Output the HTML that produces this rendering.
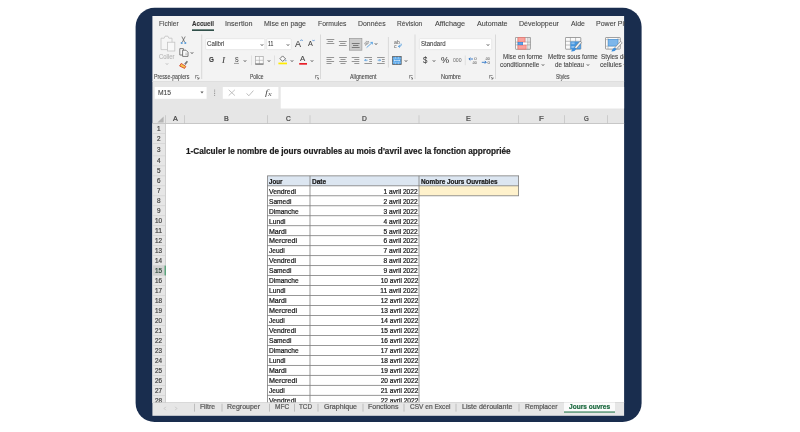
<!DOCTYPE html>
<html lang="fr">
<head>
<meta charset="utf-8">
<title>Excel - Jours ouvres</title>
<style>
html,body{margin:0;padding:0;background:#fff;}
body{width:800px;height:432px;position:relative;overflow:hidden;font-family:"Liberation Sans",sans-serif;}
.screen{will-change:transform;filter:blur(0.3px);position:absolute;left:0;top:0;width:800px;height:432px;clip-path:inset(16.00px 175.90px 16.20px 152.40px);}
.r{position:absolute;display:block;}
.t{position:absolute;white-space:nowrap;line-height:12px;font-family:"Liberation Sans",sans-serif;}
</style>
</head>
<body>
<svg class="r" style="left:0;top:0" width="800" height="432" viewBox="0 0 800 432"><rect x="135.6" y="7.8" width="506" height="414.2" rx="19" fill="#192d4e"/></svg>
<div class="screen">
<svg class="r" style="left:0;top:0" width="800" height="432" viewBox="0 0 800 432"><rect x="152.40" y="16.00" width="471.70" height="65.30" fill="#f3f3f3"/><rect x="152.40" y="81.30" width="471.70" height="42.70" fill="#e6e6e6"/><rect x="152.40" y="81.00" width="471.70" height="1.00" fill="#dfdfdf"/></svg>
<span class="t" style="top:18.40px;font-size:7.6px;color:#444;left:159.00px;transform-origin:0 50%;transform:scaleX(0.8598);-webkit-text-stroke:0.1px currentColor;">Fichier</span>
<span class="t" style="top:18.40px;font-size:7.6px;color:#333;font-weight:700;left:192.00px;transform-origin:0 50%;transform:scaleX(0.8143);-webkit-text-stroke:0.1px currentColor;">Accueil</span>
<svg class="r" style="left:0;top:0" width="800" height="432" viewBox="0 0 800 432"><rect x="192.00" y="29.40" width="22.00" height="1.50" fill="#1c3f38"/></svg>
<span class="t" style="top:18.40px;font-size:7.6px;color:#444;left:225.00px;transform-origin:0 50%;transform:scaleX(0.9471);-webkit-text-stroke:0.1px currentColor;">Insertion</span>
<span class="t" style="top:18.40px;font-size:7.6px;color:#444;left:264.00px;transform-origin:0 50%;transform:scaleX(0.9212);-webkit-text-stroke:0.1px currentColor;">Mise en page</span>
<span class="t" style="top:18.40px;font-size:7.6px;color:#444;left:318.00px;transform-origin:0 50%;transform:scaleX(0.8971);-webkit-text-stroke:0.1px currentColor;">Formules</span>
<span class="t" style="top:18.40px;font-size:7.6px;color:#444;left:358.00px;transform-origin:0 50%;transform:scaleX(0.9077);-webkit-text-stroke:0.1px currentColor;">Données</span>
<span class="t" style="top:18.40px;font-size:7.6px;color:#444;left:397.40px;transform-origin:0 50%;transform:scaleX(0.8652);-webkit-text-stroke:0.1px currentColor;">Révision</span>
<span class="t" style="top:18.40px;font-size:7.6px;color:#444;left:435.00px;transform-origin:0 50%;transform:scaleX(0.9514);-webkit-text-stroke:0.1px currentColor;">Affichage</span>
<span class="t" style="top:18.40px;font-size:7.6px;color:#444;left:476.60px;transform-origin:0 50%;transform:scaleX(0.9411);-webkit-text-stroke:0.1px currentColor;">Automate</span>
<span class="t" style="top:18.40px;font-size:7.6px;color:#444;left:518.90px;transform-origin:0 50%;transform:scaleX(0.9266);-webkit-text-stroke:0.1px currentColor;">Développeur</span>
<span class="t" style="top:18.40px;font-size:7.6px;color:#444;left:570.50px;transform-origin:0 50%;transform:scaleX(0.9077);-webkit-text-stroke:0.1px currentColor;">Aide</span>
<span class="t" style="top:18.40px;font-size:7.6px;color:#444;left:596.00px;transform-origin:0 50%;transform:scaleX(0.9252);-webkit-text-stroke:0.1px currentColor;">Power Pivot</span>
<svg class="r" style="left:0;top:0" width="800" height="432" viewBox="0 0 800 432"><rect x="201.35" y="34.50" width="0.80" height="44.50" fill="#d2d2d2"/><rect x="320.10" y="34.50" width="0.80" height="44.50" fill="#d2d2d2"/><rect x="414.60" y="34.50" width="0.80" height="44.50" fill="#d2d2d2"/><rect x="495.00" y="34.50" width="0.80" height="44.50" fill="#d2d2d2"/><rect x="387.90" y="37.00" width="0.80" height="30.50" fill="#d2d2d2"/><rect x="251.05" y="55.50" width="0.70" height="9.70" fill="#d8d8d8"/><rect x="274.15" y="55.50" width="0.70" height="9.70" fill="#d8d8d8"/><rect x="464.85" y="55.50" width="0.70" height="9.70" fill="#d8d8d8"/></svg>
<span class="t" style="top:71.20px;font-size:6.4px;color:#4a4a4a;left:154.00px;transform-origin:0 50%;transform:scaleX(0.8259);-webkit-text-stroke:0.1px currentColor;">Presse-papiers</span>
<span class="t" style="top:71.20px;font-size:6.4px;color:#4a4a4a;left:250.00px;transform-origin:0 50%;transform:scaleX(0.7698);-webkit-text-stroke:0.1px currentColor;">Police</span>
<span class="t" style="top:71.20px;font-size:6.4px;color:#4a4a4a;left:350.20px;transform-origin:0 50%;transform:scaleX(0.8301);-webkit-text-stroke:0.1px currentColor;">Alignement</span>
<span class="t" style="top:71.20px;font-size:6.4px;color:#4a4a4a;left:441.00px;transform-origin:0 50%;transform:scaleX(0.8797);-webkit-text-stroke:0.1px currentColor;">Nombre</span>
<span class="t" style="top:71.20px;font-size:6.4px;color:#4a4a4a;left:556.00px;transform-origin:0 50%;transform:scaleX(0.7813);-webkit-text-stroke:0.1px currentColor;">Styles</span>
<svg class="r" style="left:195.20px;top:75.20px" width="4.5" height="4.5" viewBox="0 0 4.5 4.5"><path d="M0.4 3.6V0.4H3.6" fill="none" stroke="#666" stroke-width="0.7"/><path d="M1.8 1.8L4 4M4 2.2V4H2.2" fill="none" stroke="#666" stroke-width="0.7"/></svg>
<svg class="r" style="left:314.60px;top:75.20px" width="4.5" height="4.5" viewBox="0 0 4.5 4.5"><path d="M0.4 3.6V0.4H3.6" fill="none" stroke="#666" stroke-width="0.7"/><path d="M1.8 1.8L4 4M4 2.2V4H2.2" fill="none" stroke="#666" stroke-width="0.7"/></svg>
<svg class="r" style="left:408.80px;top:75.20px" width="4.5" height="4.5" viewBox="0 0 4.5 4.5"><path d="M0.4 3.6V0.4H3.6" fill="none" stroke="#666" stroke-width="0.7"/><path d="M1.8 1.8L4 4M4 2.2V4H2.2" fill="none" stroke="#666" stroke-width="0.7"/></svg>
<svg class="r" style="left:489.20px;top:75.20px" width="4.5" height="4.5" viewBox="0 0 4.5 4.5"><path d="M0.4 3.6V0.4H3.6" fill="none" stroke="#666" stroke-width="0.7"/><path d="M1.8 1.8L4 4M4 2.2V4H2.2" fill="none" stroke="#666" stroke-width="0.7"/></svg>
<svg class="r" style="left:160.00px;top:35.00px" width="16" height="17" viewBox="0 0 16 17"><path d="M1 3.2H4.2L5 1.2H8L8.8 3.2H12V14.6H1Z" fill="#f6f6f6" stroke="#c4c4c4" stroke-width="0.8"/><rect x="7.4" y="7.2" width="7.4" height="8.8" fill="#f8f8f8" stroke="#c4c4c4" stroke-width="0.8"/></svg>
<span class="t" style="top:50.60px;font-size:7.0px;color:#b4b4b4;left:159.00px;transform-origin:0 50%;transform:scaleX(0.8471);-webkit-text-stroke:0.1px currentColor;">Coller</span>
<svg class="r" style="left:163.60px;top:61.20px" width="6" height="6" viewBox="0 0 6 6"><path d="M1.85 2.3249999999999997 L3 3.575 L4.15 2.3249999999999997" fill="none" stroke="#bbb" stroke-width="0.95"/></svg>
<svg class="r" style="left:179.50px;top:35.50px" width="7" height="9" viewBox="0 0 7 9"><path d="M1.8 0.5L4.6 6M5.2 0.5L2.4 6" stroke="#555" stroke-width="0.7" fill="none"/><circle cx="1.7" cy="7" r="1.1" fill="#5b9bd5"/><circle cx="5.3" cy="7" r="1.1" fill="#5b9bd5"/></svg>
<svg class="r" style="left:178.60px;top:47.60px" width="10" height="9" viewBox="0 0 10 9"><path d="M0.8 0.6H4.4V7H0.8Z" fill="#fafafa" stroke="#555" stroke-width="0.75"/><path d="M3.6 2.2H7L9 4.2V8.4H3.6Z" fill="#fafafa" stroke="#555" stroke-width="0.75"/><path d="M6.2 5.2H8.2M6.2 6.6H8.2" stroke="#999" stroke-width="0.5"/></svg>
<svg class="r" style="left:189.20px;top:49.70px" width="6" height="6" viewBox="0 0 6 6"><path d="M1.85 2.3249999999999997 L3 3.575 L4.15 2.3249999999999997" fill="none" stroke="#4a4a4a" stroke-width="0.95"/></svg>
<svg class="r" style="left:178.80px;top:59.60px" width="10" height="9" viewBox="0 0 10 9"><path d="M5.2 3.8L7.8 0.8L9 1.8L6.6 5Z" fill="#777"/><path d="M2.2 3.4L6.8 6.4L5.6 8.4L0.6 6Z" fill="#f2c94c" stroke="#d9442e" stroke-width="0.9"/></svg>
<svg class="r" style="left:0;top:0" width="800" height="432" viewBox="0 0 800 432"><rect x="205.70" y="38.70" width="59.10" height="10.90" fill="#fff" rx="1" stroke="#dedede" stroke-width="0.6"/></svg>
<span class="t" style="top:38.30px;font-size:6.8px;color:#444;left:207.20px;transform-origin:0 50%;transform:scaleX(0.8980);-webkit-text-stroke:0.1px currentColor;">Calibri</span>
<svg class="r" style="left:258.60px;top:41.60px" width="6" height="6" viewBox="0 0 6 6"><path d="M1.85 2.3249999999999997 L3 3.575 L4.15 2.3249999999999997" fill="none" stroke="#4a4a4a" stroke-width="0.95"/></svg>
<svg class="r" style="left:0;top:0" width="800" height="432" viewBox="0 0 800 432"><rect x="266.70" y="38.70" width="24.50" height="10.90" fill="#fff" rx="1" stroke="#dedede" stroke-width="0.6"/></svg>
<span class="t" style="top:38.30px;font-size:6.8px;color:#333;left:267.90px;transform-origin:0 50%;transform:scaleX(0.7504);-webkit-text-stroke:0.1px currentColor;">11</span>
<svg class="r" style="left:285.40px;top:41.60px" width="6" height="6" viewBox="0 0 6 6"><path d="M1.85 2.3249999999999997 L3 3.575 L4.15 2.3249999999999997" fill="none" stroke="#4a4a4a" stroke-width="0.95"/></svg>
<span class="t" style="top:37.60px;font-size:9.4px;color:#444;left:294.60px;transform-origin:0 50%;transform:scaleX(0.9576);-webkit-text-stroke:0.1px currentColor;">A</span>
<svg class="r" style="left:300.20px;top:39.20px" width="3" height="3" viewBox="0 0 3 3"><path d="M0.3 2L1.5 0.7L2.7 2" fill="none" stroke="#2e75c7" stroke-width="0.7"/></svg>
<span class="t" style="top:38.40px;font-size:7.6px;color:#444;left:308.20px;transform-origin:0 50%;transform:scaleX(0.9452);-webkit-text-stroke:0.1px currentColor;">A</span>
<svg class="r" style="left:312.40px;top:39.40px" width="3" height="3" viewBox="0 0 3 3"><path d="M0.3 0.8L1.5 2.1L2.7 0.8" fill="none" stroke="#2e75c7" stroke-width="0.7"/></svg>
<span class="t" style="top:54.40px;font-size:7.2px;color:#333;font-weight:700;left:209.30px;transform-origin:0 50%;transform:scaleX(0.8760);-webkit-text-stroke:0.1px currentColor;">G</span>
<span class="t" style="font-family:'Liberation Serif',serif;top:55.00px;font-size:7.6px;color:#444;font-style:italic;left:222.40px;transform-origin:0 50%;transform:scaleX(1.1852);-webkit-text-stroke:0.1px currentColor;">I</span>
<span class="t" style="top:53.80px;font-size:6.8px;color:#444;left:234.60px;transform-origin:0 50%;transform:scaleX(0.7918);-webkit-text-stroke:0.1px currentColor;">S</span>
<svg class="r" style="left:0;top:0" width="800" height="432" viewBox="0 0 800 432"><rect x="234.00" y="62.95" width="4.90" height="0.60" fill="#666"/></svg>
<svg class="r" style="left:242.40px;top:57.80px" width="6" height="6" viewBox="0 0 6 6"><path d="M1.85 2.3249999999999997 L3 3.575 L4.15 2.3249999999999997" fill="none" stroke="#4a4a4a" stroke-width="0.95"/></svg>
<svg class="r" style="left:255.00px;top:56.00px" width="9" height="9" viewBox="0 0 9 9"><rect x="0.6" y="0.6" width="7.6" height="7.4" fill="#fafafa" stroke="#9a9a9a" stroke-width="0.6"/><path d="M4.4 0.6V8M0.6 4.3H8.2" stroke="#a8a8a8" stroke-width="0.6"/><path d="M0.3 8.1H8.5" stroke="#555" stroke-width="0.9"/></svg>
<svg class="r" style="left:265.60px;top:57.80px" width="6" height="6" viewBox="0 0 6 6"><path d="M1.85 2.3249999999999997 L3 3.575 L4.15 2.3249999999999997" fill="none" stroke="#4a4a4a" stroke-width="0.95"/></svg>
<svg class="r" style="left:278.40px;top:55.40px" width="10" height="10" viewBox="0 0 10 10"><path d="M4.6 0.9L7.6 3.9L4.6 6.4L1.9 3.7Z" fill="#fafafa" stroke="#555" stroke-width="0.8"/><path d="M7.9 4.4Q9 6 7.9 6.4Q6.9 6 7.9 4.4Z" fill="#2e75c7"/><rect x="0.4" y="7.6" width="8.6" height="1.7" fill="#ffeb00"/></svg>
<svg class="r" style="left:288.80px;top:57.80px" width="6" height="6" viewBox="0 0 6 6"><path d="M1.85 2.3249999999999997 L3 3.575 L4.15 2.3249999999999997" fill="none" stroke="#4a4a4a" stroke-width="0.95"/></svg>
<span class="t" style="top:53.20px;font-size:7.4px;color:#444;left:300.40px;transform-origin:0 50%;transform:scaleX(1.0532);-webkit-text-stroke:0.1px currentColor;">A</span>
<svg class="r" style="left:0;top:0" width="800" height="432" viewBox="0 0 800 432"><rect x="299.20" y="63.00" width="7.80" height="1.70" fill="#e8202a"/></svg>
<svg class="r" style="left:309.20px;top:57.80px" width="6" height="6" viewBox="0 0 6 6"><path d="M1.85 2.3249999999999997 L3 3.575 L4.15 2.3249999999999997" fill="none" stroke="#4a4a4a" stroke-width="0.95"/></svg>
<svg class="r" style="left:0;top:0" width="800" height="432" viewBox="0 0 800 432"><rect x="326.50" y="39.15" width="7.80" height="0.70" fill="#6e6e6e"/><rect x="327.70" y="41.25" width="5.40" height="0.70" fill="#6e6e6e"/><rect x="326.50" y="43.30" width="7.80" height="0.70" fill="#6e6e6e"/><rect x="338.90" y="41.10" width="7.80" height="0.70" fill="#6e6e6e"/><rect x="340.10" y="43.15" width="5.40" height="0.70" fill="#6e6e6e"/><rect x="338.90" y="45.25" width="7.80" height="0.70" fill="#6e6e6e"/><rect x="349.40" y="38.40" width="12.50" height="11.80" fill="#cccccc" stroke="#9a9a9a" stroke-width="0.7"/><rect x="351.80" y="43.10" width="7.80" height="0.70" fill="#555"/><rect x="353.00" y="45.15" width="5.40" height="0.70" fill="#555"/><rect x="351.80" y="47.25" width="7.80" height="0.70" fill="#555"/></svg>
<svg class="r" style="left:364.00px;top:38.60px" width="10" height="10" viewBox="0 0 10 10"><text x="0.2" y="5.6" font-family="Liberation Sans, sans-serif" font-size="5" fill="#666" transform="rotate(-35 2.5 4.5)">ab</text><path d="M2.6 8.6L8.4 3.4M8.4 3.4H6.4M8.4 3.4V5.4" stroke="#3a92dc" stroke-width="0.75" fill="none"/></svg>
<svg class="r" style="left:373.40px;top:41.20px" width="6" height="6" viewBox="0 0 6 6"><path d="M1.85 2.3249999999999997 L3 3.575 L4.15 2.3249999999999997" fill="none" stroke="#4a4a4a" stroke-width="0.95"/></svg>
<svg class="r" style="left:392.80px;top:39.00px" width="10" height="10" viewBox="0 0 10 10"><text x="1" y="4.8" font-family="Liberation Sans, sans-serif" font-size="5.2" fill="#5a5a5a">ab</text><text x="1" y="8.8" font-family="Liberation Sans, sans-serif" font-size="5.2" fill="#5a5a5a">c</text><path d="M8 4.6Q9 7.6 5.6 7.4M6.8 6.2L5.4 7.4L6.8 8.6" stroke="#3a8fdc" stroke-width="0.8" fill="none"/></svg>
<svg class="r" style="left:0;top:0" width="800" height="432" viewBox="0 0 800 432"><rect x="326.50" y="57.05" width="7.60" height="0.70" fill="#6e6e6e"/><rect x="326.50" y="59.15" width="5.00" height="0.70" fill="#6e6e6e"/><rect x="326.50" y="61.20" width="7.60" height="0.70" fill="#6e6e6e"/><rect x="326.50" y="63.25" width="5.00" height="0.70" fill="#6e6e6e"/><rect x="339.20" y="57.05" width="7.60" height="0.70" fill="#6e6e6e"/><rect x="340.50" y="59.15" width="5.00" height="0.70" fill="#6e6e6e"/><rect x="339.20" y="61.20" width="7.60" height="0.70" fill="#6e6e6e"/><rect x="340.50" y="63.25" width="5.00" height="0.70" fill="#6e6e6e"/><rect x="351.70" y="57.05" width="7.60" height="0.70" fill="#6e6e6e"/><rect x="354.30" y="59.15" width="5.00" height="0.70" fill="#6e6e6e"/><rect x="351.70" y="61.20" width="7.60" height="0.70" fill="#6e6e6e"/><rect x="354.30" y="63.25" width="5.00" height="0.70" fill="#6e6e6e"/><rect x="364.40" y="57.05" width="7.60" height="0.70" fill="#6e6e6e"/><rect x="369.20" y="59.15" width="2.80" height="0.70" fill="#6e6e6e"/><rect x="369.20" y="61.20" width="2.80" height="0.70" fill="#6e6e6e"/><rect x="364.40" y="63.25" width="7.60" height="0.70" fill="#6e6e6e"/></svg>
<svg class="r" style="left:364.40px;top:58.20px" width="4.4" height="4.4" viewBox="0 0 4.4 4.4"><path d="M3.6 2.2H0.7M1.8 1.1L0.7 2.2L1.8 3.3" stroke="#3a8fdc" stroke-width="0.75" fill="none"/></svg>
<svg class="r" style="left:0;top:0" width="800" height="432" viewBox="0 0 800 432"><rect x="377.10" y="57.05" width="7.60" height="0.70" fill="#6e6e6e"/><rect x="381.90" y="59.15" width="2.80" height="0.70" fill="#6e6e6e"/><rect x="381.90" y="61.20" width="2.80" height="0.70" fill="#6e6e6e"/><rect x="377.10" y="63.25" width="7.60" height="0.70" fill="#6e6e6e"/></svg>
<svg class="r" style="left:376.80px;top:58.20px" width="4.4" height="4.4" viewBox="0 0 4.4 4.4"><path d="M0.7 2.2H3.6M2.5 1.1L3.6 2.2L2.5 3.3" stroke="#3a8fdc" stroke-width="0.75" fill="none"/></svg>
<svg class="r" style="left:392.00px;top:55.80px" width="10" height="9.4" viewBox="0 0 10 9.4"><rect x="0.6" y="0.6" width="8.6" height="7.8" fill="#58a6e8" stroke="#5c5c5c" stroke-width="0.8"/><path d="M0.6 2.6H9.2M0.6 6.4H9.2" stroke="#9ccaf2" stroke-width="0.5"/><path d="M3.4 0.8V2.6M6.4 0.8V2.6M3.4 6.4V8.2M6.4 6.4V8.2" stroke="#cfe6fa" stroke-width="0.5"/><path d="M2 4.5H7.8M2.9 3.7L2 4.5L2.9 5.3M6.9 3.7L7.8 4.5L6.9 5.3" stroke="#eef6fd" stroke-width="0.6" fill="none"/></svg>
<svg class="r" style="left:403.10px;top:57.60px" width="6" height="6" viewBox="0 0 6 6"><path d="M1.85 2.3249999999999997 L3 3.575 L4.15 2.3249999999999997" fill="none" stroke="#4a4a4a" stroke-width="0.95"/></svg>
<svg class="r" style="left:0;top:0" width="800" height="432" viewBox="0 0 800 432"><rect x="419.40" y="38.70" width="72.30" height="10.90" fill="#fff" rx="1" stroke="#dedede" stroke-width="0.6"/></svg>
<span class="t" style="top:38.30px;font-size:6.8px;color:#444;left:420.60px;transform-origin:0 50%;transform:scaleX(0.8915);-webkit-text-stroke:0.1px currentColor;">Standard</span>
<svg class="r" style="left:485.00px;top:41.60px" width="6" height="6" viewBox="0 0 6 6"><path d="M1.85 2.3249999999999997 L3 3.575 L4.15 2.3249999999999997" fill="none" stroke="#4a4a4a" stroke-width="0.95"/></svg>
<span class="t" style="top:54.20px;font-size:9.0px;color:#3a3a3a;left:422.60px;transform-origin:0 50%;transform:scaleX(0.8773);-webkit-text-stroke:0.05px currentColor;">$</span>
<svg class="r" style="left:431.30px;top:57.80px" width="6" height="6" viewBox="0 0 6 6"><path d="M1.85 2.3249999999999997 L3 3.575 L4.15 2.3249999999999997" fill="none" stroke="#4a4a4a" stroke-width="0.95"/></svg>
<span class="t" style="top:54.20px;font-size:9.0px;color:#3a3a3a;left:441.20px;transform-origin:0 50%;transform:scaleX(1.0105);-webkit-text-stroke:0.05px currentColor;">%</span>
<span class="t" style="top:55.30px;font-size:4.6px;color:#6a6a6a;left:453.20px;transform-origin:0 50%;transform:scaleX(1.1210);-webkit-text-stroke:0px currentColor;">000</span>
<svg class="r" style="left:468.40px;top:55.80px" width="10" height="9.5" viewBox="0 0 10 9.5"><text x="8.7" y="3.8" font-family="Liberation Sans, sans-serif" font-size="4.3" fill="#444" text-anchor="end">0</text><text x="8.7" y="7.9" font-family="Liberation Sans, sans-serif" font-size="4.3" fill="#444" text-anchor="end" textLength="5" lengthAdjust="spacingAndGlyphs">.00</text><path d="M5 3H0.9M2.3 1.6L0.9 3L2.3 4.4" stroke="#2e75c7" stroke-width="0.9" fill="none"/></svg>
<svg class="r" style="left:480.80px;top:55.80px" width="10" height="9.5" viewBox="0 0 10 9.5"><text x="8.8" y="3.8" font-family="Liberation Sans, sans-serif" font-size="4.3" fill="#444" text-anchor="end" textLength="5" lengthAdjust="spacingAndGlyphs">.00</text><text x="8.8" y="7.9" font-family="Liberation Sans, sans-serif" font-size="4.3" fill="#444" text-anchor="end">0</text><path d="M0.8 6.3H5.2M3.8 4.9L5.2 6.3L3.8 7.7" stroke="#2e75c7" stroke-width="0.9" fill="none"/></svg>
<svg class="r" style="left:515.20px;top:36.50px" width="16" height="13" viewBox="0 0 16 13"><rect x="0.4" y="0.4" width="15.2" height="11.9" fill="#fafafa" stroke="#7a7a7a" stroke-width="0.7" rx="0.6"/><path d="M0.4 5.1H15.6M0.4 7.9H15.6M2.8 0.4V12.3M10 0.4V12.3M12.3 0.4V12.3M14 0.4V12.3" stroke="#8c8c8c" stroke-width="0.5" fill="none"/><rect x="3" y="0.7" width="7" height="4.3" fill="#f9a29d" stroke="#f26d63" stroke-width="0.6"/><rect x="3" y="8" width="8.1" height="4.1" fill="#f9a29d" stroke="#f26d63" stroke-width="0.6"/><rect x="7.7" y="5.6" width="4.2" height="1.9" fill="#fff"/><rect x="3" y="5.3" width="4.7" height="2.5" fill="#5fa3e8" stroke="#2f7fd6" stroke-width="0.6"/></svg>
<span class="t" style="top:50.70px;font-size:6.8px;color:#444;left:503.00px;transform-origin:0 50%;transform:scaleX(0.9196);-webkit-text-stroke:0.1px currentColor;">Mise en forme</span>
<span class="t" style="top:59.10px;font-size:6.8px;color:#444;left:500.40px;transform-origin:0 50%;transform:scaleX(0.9452);-webkit-text-stroke:0.1px currentColor;">conditionnelle</span>
<svg class="r" style="left:540.20px;top:61.80px" width="6" height="6" viewBox="0 0 6 6"><path d="M1.9 2.35 L3 3.55 L4.1 2.35" fill="none" stroke="#4a4a4a" stroke-width="0.95"/></svg>
<svg class="r" style="left:564.80px;top:36.60px" width="18" height="16" viewBox="0 0 18 16"><rect x="0.4" y="0.5" width="15.4" height="11.7" fill="#fafafa" stroke="#7a7a7a" stroke-width="0.7" rx="0.6"/><path d="M0.4 4.3H15.8M0.4 8H15.8M5.4 0.5V12.2M10.6 0.5V12.2" stroke="#8c8c8c" stroke-width="0.55" fill="none"/><rect x="5.4" y="4.5" width="10.4" height="7.7" fill="#4596de"/><rect x="6.4" y="5.4" width="3.2" height="1.8" fill="#8fc0ee"/><rect x="6.4" y="9" width="3.2" height="2" fill="#8fc0ee"/><rect x="12" y="9" width="2.8" height="2" fill="#6aaae6"/><path d="M15 4.2L16.6 5.6L11.2 11.8L9.6 10.4Z" fill="#f6f6f6" stroke="#6a6a6a" stroke-width="0.55"/><path d="M9.8 10.6Q7.4 10.8 6.2 14.6Q10 14.8 11.2 12Z" fill="#3d8fdc"/></svg>
<span class="t" style="top:50.70px;font-size:6.8px;color:#444;left:547.80px;transform-origin:0 50%;transform:scaleX(0.9091);-webkit-text-stroke:0.1px currentColor;">Mettre sous forme</span>
<span class="t" style="top:59.10px;font-size:6.8px;color:#444;left:555.00px;transform-origin:0 50%;transform:scaleX(0.9134);-webkit-text-stroke:0.1px currentColor;">de tableau</span>
<svg class="r" style="left:584.80px;top:61.80px" width="6" height="6" viewBox="0 0 6 6"><path d="M1.9 2.35 L3 3.55 L4.1 2.35" fill="none" stroke="#4a4a4a" stroke-width="0.95"/></svg>
<svg class="r" style="left:605.00px;top:36.60px" width="18" height="16" viewBox="0 0 18 16"><rect x="0.5" y="0.5" width="14.8" height="11.6" fill="#fafafa" stroke="#7a7a7a" stroke-width="0.7" rx="0.6"/><path d="M0.5 2.6H15.3M0.5 9.2H15.3M3 0.5V12.1M13 0.5V12.1" stroke="#9a9a9a" stroke-width="0.5" fill="none"/><rect x="3.2" y="2.4" width="9.8" height="6.6" fill="#7db6ea" stroke="#3f8fd8" stroke-width="0.6"/><path d="M15.6 4.4L17.2 5.8L11.4 12L9.8 10.6Z" fill="#f6f6f6" stroke="#6a6a6a" stroke-width="0.55"/><path d="M10 10.8Q7.6 11 6.4 14.6Q10.2 14.8 11.4 12.2Z" fill="#3d8fdc"/></svg>
<span class="t" style="top:50.70px;font-size:6.8px;color:#444;left:600.50px;transform-origin:0 50%;transform:scaleX(0.9296);-webkit-text-stroke:0.1px currentColor;">Styles de</span>
<span class="t" style="top:59.10px;font-size:6.8px;color:#444;left:599.60px;transform-origin:0 50%;transform:scaleX(0.9660);-webkit-text-stroke:0.1px currentColor;">cellules</span>
<svg class="r" style="left:622.00px;top:61.80px" width="6" height="6" viewBox="0 0 6 6"><path d="M1.9 2.35 L3 3.55 L4.1 2.35" fill="none" stroke="#4a4a4a" stroke-width="0.95"/></svg>
<svg class="r" style="left:0;top:0" width="800" height="432" viewBox="0 0 800 432"><rect x="154.70" y="87.00" width="51.90" height="11.80" fill="#fff"/></svg>
<span class="t" style="top:87.00px;font-size:6.8px;color:#444;left:157.50px;transform-origin:0 50%;transform:scaleX(0.9898);-webkit-text-stroke:0.1px currentColor;">M15</span>
<svg class="r" style="left:199.80px;top:91.40px" width="4" height="3" viewBox="0 0 4 3"><path d="M0.4 0.5L2 2.4L3.6 0.5Z" fill="#5a5a5a"/></svg>
<svg class="r" style="left:0;top:0" width="800" height="432" viewBox="0 0 800 432"><rect x="214.20" y="89.65" width="0.90" height="0.90" fill="#808080"/><rect x="214.20" y="91.40" width="0.90" height="0.90" fill="#808080"/><rect x="214.20" y="93.15" width="0.90" height="0.90" fill="#808080"/><rect x="214.20" y="94.90" width="0.90" height="0.90" fill="#808080"/><rect x="222.80" y="87.00" width="55.60" height="11.80" fill="#fff"/></svg>
<svg class="r" style="left:227.80px;top:89.40px" width="8" height="8" viewBox="0 0 8 8"><path d="M0.7 0.8L6.9 6.6M6.9 0.8L0.7 6.6" stroke="#b2b2b2" stroke-width="0.8"/></svg>
<svg class="r" style="left:246.40px;top:89.60px" width="8" height="7" viewBox="0 0 8 7"><path d="M0.6 3.4L2.8 5.8L7.4 0.6" stroke="#b2b2b2" stroke-width="0.85" fill="none"/></svg>
<span class="t" style="font-family:'Liberation Serif',serif;top:86.80px;font-size:8.4px;color:#555;font-style:italic;left:265.40px;transform-origin:0 50%;transform:scaleX(1.3745);-webkit-text-stroke:0px currentColor;">f</span>
<span class="t" style="font-family:'Liberation Serif',serif;top:88.20px;font-size:6.0px;color:#555;font-style:italic;left:268.10px;transform-origin:0 50%;transform:scaleX(1.3848);-webkit-text-stroke:0px currentColor;">x</span>
<svg class="r" style="left:0;top:0" width="800" height="432" viewBox="0 0 800 432"><rect x="280.70" y="87.00" width="343.40" height="21.50" fill="#fff"/><rect x="152.40" y="123.60" width="471.70" height="279.40" fill="#fff"/><rect x="152.40" y="123.60" width="13.00" height="279.40" fill="#e6e6e6"/><rect x="165.00" y="115.20" width="0.80" height="8.40" fill="#c6c6c6"/></svg>
<span class="t" style="top:113.30px;font-size:6.8px;color:#444;left:172.50px;transform-origin:0 50%;transform:scaleX(1.0557);-webkit-text-stroke:0.22px currentColor;">A</span>
<svg class="r" style="left:0;top:0" width="800" height="432" viewBox="0 0 800 432"><rect x="184.00" y="115.20" width="0.80" height="8.40" fill="#c6c6c6"/></svg>
<span class="t" style="top:113.30px;font-size:6.8px;color:#444;left:223.60px;transform-origin:0 50%;transform:scaleX(1.0557);-webkit-text-stroke:0.22px currentColor;">B</span>
<svg class="r" style="left:0;top:0" width="800" height="432" viewBox="0 0 800 432"><rect x="267.20" y="115.20" width="0.80" height="8.40" fill="#c6c6c6"/></svg>
<span class="t" style="top:113.30px;font-size:6.8px;color:#444;left:286.40px;transform-origin:0 50%;transform:scaleX(0.9752);-webkit-text-stroke:0.22px currentColor;">C</span>
<svg class="r" style="left:0;top:0" width="800" height="432" viewBox="0 0 800 432"><rect x="309.60" y="115.20" width="0.80" height="8.40" fill="#c6c6c6"/></svg>
<span class="t" style="top:113.30px;font-size:6.8px;color:#444;left:362.10px;transform-origin:0 50%;transform:scaleX(0.9752);-webkit-text-stroke:0.22px currentColor;">D</span>
<svg class="r" style="left:0;top:0" width="800" height="432" viewBox="0 0 800 432"><rect x="418.60" y="115.20" width="0.80" height="8.40" fill="#c6c6c6"/></svg>
<span class="t" style="top:113.30px;font-size:6.8px;color:#444;left:466.40px;transform-origin:0 50%;transform:scaleX(1.0557);-webkit-text-stroke:0.22px currentColor;">E</span>
<svg class="r" style="left:0;top:0" width="800" height="432" viewBox="0 0 800 432"><rect x="518.20" y="115.20" width="0.80" height="8.40" fill="#c6c6c6"/></svg>
<span class="t" style="top:113.30px;font-size:6.8px;color:#444;left:539.20px;transform-origin:0 50%;transform:scaleX(1.1549);-webkit-text-stroke:0.22px currentColor;">F</span>
<svg class="r" style="left:0;top:0" width="800" height="432" viewBox="0 0 800 432"><rect x="564.20" y="115.20" width="0.80" height="8.40" fill="#c6c6c6"/></svg>
<span class="t" style="top:113.30px;font-size:6.8px;color:#444;left:583.65px;transform-origin:0 50%;transform:scaleX(0.9062);-webkit-text-stroke:0.22px currentColor;">G</span>
<svg class="r" style="left:0;top:0" width="800" height="432" viewBox="0 0 800 432"><rect x="607.10" y="115.20" width="0.80" height="8.40" fill="#c6c6c6"/><rect x="152.40" y="123.20" width="471.70" height="0.80" fill="#bdbdbd"/><rect x="165.00" y="123.60" width="0.80" height="279.40" fill="#c6c6c6"/></svg>
<svg class="r" style="left:157.40px;top:116.20px" width="7" height="7" viewBox="0 0 7 7"><path d="M6.6 0.4V6.6H0.4Z" fill="#b4b4b4"/></svg>
<span class="t" style="top:122.70px;font-size:7.2px;color:#444;left:156.92px;transform-origin:0 50%;transform:scaleX(0.8875);-webkit-text-stroke:0.22px currentColor;">1</span>
<svg class="r" style="left:0;top:0" width="800" height="432" viewBox="0 0 800 432"><rect x="152.40" y="133.00" width="13.00" height="0.60" fill="#cfcfcf"/></svg>
<span class="t" style="top:132.70px;font-size:7.2px;color:#444;left:156.92px;transform-origin:0 50%;transform:scaleX(0.8875);-webkit-text-stroke:0.22px currentColor;">2</span>
<svg class="r" style="left:0;top:0" width="800" height="432" viewBox="0 0 800 432"><rect x="152.40" y="143.20" width="13.00" height="0.60" fill="#cfcfcf"/></svg>
<span class="t" style="top:144.00px;font-size:7.2px;color:#444;left:156.92px;transform-origin:0 50%;transform:scaleX(0.8875);-webkit-text-stroke:0.22px currentColor;">3</span>
<svg class="r" style="left:0;top:0" width="800" height="432" viewBox="0 0 800 432"><rect x="152.40" y="155.60" width="13.00" height="0.60" fill="#cfcfcf"/></svg>
<span class="t" style="top:155.19px;font-size:7.2px;color:#444;left:156.92px;transform-origin:0 50%;transform:scaleX(0.8875);-webkit-text-stroke:0.22px currentColor;">4</span>
<svg class="r" style="left:0;top:0" width="800" height="432" viewBox="0 0 800 432"><rect x="152.40" y="165.57" width="13.00" height="0.60" fill="#cfcfcf"/></svg>
<span class="t" style="top:165.16px;font-size:7.2px;color:#444;left:156.92px;transform-origin:0 50%;transform:scaleX(0.8875);-webkit-text-stroke:0.22px currentColor;">5</span>
<svg class="r" style="left:0;top:0" width="800" height="432" viewBox="0 0 800 432"><rect x="152.40" y="175.55" width="13.00" height="0.60" fill="#cfcfcf"/></svg>
<span class="t" style="top:175.14px;font-size:7.2px;color:#444;left:156.92px;transform-origin:0 50%;transform:scaleX(0.8875);-webkit-text-stroke:0.22px currentColor;">6</span>
<svg class="r" style="left:0;top:0" width="800" height="432" viewBox="0 0 800 432"><rect x="152.40" y="185.52" width="13.00" height="0.60" fill="#cfcfcf"/></svg>
<span class="t" style="top:185.11px;font-size:7.2px;color:#444;left:156.92px;transform-origin:0 50%;transform:scaleX(0.8875);-webkit-text-stroke:0.22px currentColor;">7</span>
<svg class="r" style="left:0;top:0" width="800" height="432" viewBox="0 0 800 432"><rect x="152.40" y="195.50" width="13.00" height="0.60" fill="#cfcfcf"/></svg>
<span class="t" style="top:195.09px;font-size:7.2px;color:#444;left:156.92px;transform-origin:0 50%;transform:scaleX(0.8875);-webkit-text-stroke:0.22px currentColor;">8</span>
<svg class="r" style="left:0;top:0" width="800" height="432" viewBox="0 0 800 432"><rect x="152.40" y="205.47" width="13.00" height="0.60" fill="#cfcfcf"/></svg>
<span class="t" style="top:205.06px;font-size:7.2px;color:#444;left:156.92px;transform-origin:0 50%;transform:scaleX(0.8875);-webkit-text-stroke:0.22px currentColor;">9</span>
<svg class="r" style="left:0;top:0" width="800" height="432" viewBox="0 0 800 432"><rect x="152.40" y="215.45" width="13.00" height="0.60" fill="#cfcfcf"/></svg>
<span class="t" style="top:215.04px;font-size:7.2px;color:#444;left:155.15px;transform-origin:0 50%;transform:scaleX(0.8875);-webkit-text-stroke:0.22px currentColor;">10</span>
<svg class="r" style="left:0;top:0" width="800" height="432" viewBox="0 0 800 432"><rect x="152.40" y="225.43" width="13.00" height="0.60" fill="#cfcfcf"/></svg>
<span class="t" style="top:225.01px;font-size:7.2px;color:#444;left:155.15px;transform-origin:0 50%;transform:scaleX(0.9506);-webkit-text-stroke:0.22px currentColor;">11</span>
<svg class="r" style="left:0;top:0" width="800" height="432" viewBox="0 0 800 432"><rect x="152.40" y="235.40" width="13.00" height="0.60" fill="#cfcfcf"/></svg>
<span class="t" style="top:234.99px;font-size:7.2px;color:#444;left:155.15px;transform-origin:0 50%;transform:scaleX(0.8875);-webkit-text-stroke:0.22px currentColor;">12</span>
<svg class="r" style="left:0;top:0" width="800" height="432" viewBox="0 0 800 432"><rect x="152.40" y="245.38" width="13.00" height="0.60" fill="#cfcfcf"/></svg>
<span class="t" style="top:244.96px;font-size:7.2px;color:#444;left:155.15px;transform-origin:0 50%;transform:scaleX(0.8875);-webkit-text-stroke:0.22px currentColor;">13</span>
<svg class="r" style="left:0;top:0" width="800" height="432" viewBox="0 0 800 432"><rect x="152.40" y="255.35" width="13.00" height="0.60" fill="#cfcfcf"/></svg>
<span class="t" style="top:254.94px;font-size:7.2px;color:#444;left:155.15px;transform-origin:0 50%;transform:scaleX(0.8875);-webkit-text-stroke:0.22px currentColor;">14</span>
<svg class="r" style="left:0;top:0" width="800" height="432" viewBox="0 0 800 432"><rect x="152.40" y="265.32" width="13.00" height="0.60" fill="#cfcfcf"/><rect x="152.40" y="265.93" width="13.00" height="9.38" fill="#d2d2d2"/><rect x="164.60" y="265.62" width="1.20" height="9.98" fill="#3f9a68"/></svg>
<span class="t" style="top:264.91px;font-size:7.2px;color:#2f4a3c;left:155.15px;transform-origin:0 50%;transform:scaleX(0.8875);-webkit-text-stroke:0.22px currentColor;">15</span>
<svg class="r" style="left:0;top:0" width="800" height="432" viewBox="0 0 800 432"><rect x="152.40" y="275.30" width="13.00" height="0.60" fill="#cfcfcf"/></svg>
<span class="t" style="top:274.89px;font-size:7.2px;color:#444;left:155.15px;transform-origin:0 50%;transform:scaleX(0.8875);-webkit-text-stroke:0.22px currentColor;">16</span>
<svg class="r" style="left:0;top:0" width="800" height="432" viewBox="0 0 800 432"><rect x="152.40" y="285.27" width="13.00" height="0.60" fill="#cfcfcf"/></svg>
<span class="t" style="top:284.86px;font-size:7.2px;color:#444;left:155.15px;transform-origin:0 50%;transform:scaleX(0.8875);-webkit-text-stroke:0.22px currentColor;">17</span>
<svg class="r" style="left:0;top:0" width="800" height="432" viewBox="0 0 800 432"><rect x="152.40" y="295.25" width="13.00" height="0.60" fill="#cfcfcf"/></svg>
<span class="t" style="top:294.84px;font-size:7.2px;color:#444;left:155.15px;transform-origin:0 50%;transform:scaleX(0.8875);-webkit-text-stroke:0.22px currentColor;">18</span>
<svg class="r" style="left:0;top:0" width="800" height="432" viewBox="0 0 800 432"><rect x="152.40" y="305.22" width="13.00" height="0.60" fill="#cfcfcf"/></svg>
<span class="t" style="top:304.81px;font-size:7.2px;color:#444;left:155.15px;transform-origin:0 50%;transform:scaleX(0.8875);-webkit-text-stroke:0.22px currentColor;">19</span>
<svg class="r" style="left:0;top:0" width="800" height="432" viewBox="0 0 800 432"><rect x="152.40" y="315.20" width="13.00" height="0.60" fill="#cfcfcf"/></svg>
<span class="t" style="top:314.79px;font-size:7.2px;color:#444;left:155.15px;transform-origin:0 50%;transform:scaleX(0.8875);-webkit-text-stroke:0.22px currentColor;">20</span>
<svg class="r" style="left:0;top:0" width="800" height="432" viewBox="0 0 800 432"><rect x="152.40" y="325.18" width="13.00" height="0.60" fill="#cfcfcf"/></svg>
<span class="t" style="top:324.76px;font-size:7.2px;color:#444;left:155.15px;transform-origin:0 50%;transform:scaleX(0.8875);-webkit-text-stroke:0.22px currentColor;">21</span>
<svg class="r" style="left:0;top:0" width="800" height="432" viewBox="0 0 800 432"><rect x="152.40" y="335.15" width="13.00" height="0.60" fill="#cfcfcf"/></svg>
<span class="t" style="top:334.74px;font-size:7.2px;color:#444;left:155.15px;transform-origin:0 50%;transform:scaleX(0.8875);-webkit-text-stroke:0.22px currentColor;">22</span>
<svg class="r" style="left:0;top:0" width="800" height="432" viewBox="0 0 800 432"><rect x="152.40" y="345.12" width="13.00" height="0.60" fill="#cfcfcf"/></svg>
<span class="t" style="top:344.71px;font-size:7.2px;color:#444;left:155.15px;transform-origin:0 50%;transform:scaleX(0.8875);-webkit-text-stroke:0.22px currentColor;">23</span>
<svg class="r" style="left:0;top:0" width="800" height="432" viewBox="0 0 800 432"><rect x="152.40" y="355.10" width="13.00" height="0.60" fill="#cfcfcf"/></svg>
<span class="t" style="top:354.69px;font-size:7.2px;color:#444;left:155.15px;transform-origin:0 50%;transform:scaleX(0.8875);-webkit-text-stroke:0.22px currentColor;">24</span>
<svg class="r" style="left:0;top:0" width="800" height="432" viewBox="0 0 800 432"><rect x="152.40" y="365.07" width="13.00" height="0.60" fill="#cfcfcf"/></svg>
<span class="t" style="top:364.66px;font-size:7.2px;color:#444;left:155.15px;transform-origin:0 50%;transform:scaleX(0.8875);-webkit-text-stroke:0.22px currentColor;">25</span>
<svg class="r" style="left:0;top:0" width="800" height="432" viewBox="0 0 800 432"><rect x="152.40" y="375.05" width="13.00" height="0.60" fill="#cfcfcf"/></svg>
<span class="t" style="top:374.64px;font-size:7.2px;color:#444;left:155.15px;transform-origin:0 50%;transform:scaleX(0.8875);-webkit-text-stroke:0.22px currentColor;">26</span>
<svg class="r" style="left:0;top:0" width="800" height="432" viewBox="0 0 800 432"><rect x="152.40" y="385.02" width="13.00" height="0.60" fill="#cfcfcf"/></svg>
<span class="t" style="top:384.61px;font-size:7.2px;color:#444;left:155.15px;transform-origin:0 50%;transform:scaleX(0.8875);-webkit-text-stroke:0.22px currentColor;">27</span>
<svg class="r" style="left:0;top:0" width="800" height="432" viewBox="0 0 800 432"><rect x="152.40" y="395.00" width="13.00" height="0.60" fill="#cfcfcf"/></svg>
<span class="t" style="top:394.59px;font-size:7.2px;color:#444;left:155.15px;transform-origin:0 50%;transform:scaleX(0.8875);-webkit-text-stroke:0.22px currentColor;">28</span>
<span class="t" style="top:144.60px;font-size:9.0px;color:#1a1a1a;font-weight:700;left:186.40px;transform-origin:0 50%;transform:scaleX(0.9112);-webkit-text-stroke:0.22px currentColor;">1-Calculer le nombre de jours ouvrables au mois d&#x27;avril avec la fonction appropriée</span>
<svg class="r" style="left:0;top:0" width="800" height="432" viewBox="0 0 800 432"><rect x="267.60" y="175.85" width="251.00" height="9.97" fill="#dce6f1"/><rect x="419.00" y="185.82" width="99.60" height="9.98" fill="#fff2cc"/></svg>
<span class="t" style="top:175.64px;font-size:6.7px;color:#1a1a1a;font-weight:700;left:269.20px;transform-origin:0 50%;transform:scaleX(0.9241);-webkit-text-stroke:0.22px currentColor;">Jour</span>
<span class="t" style="top:175.64px;font-size:6.7px;color:#1a1a1a;font-weight:700;left:311.80px;transform-origin:0 50%;transform:scaleX(0.9793);-webkit-text-stroke:0.22px currentColor;">Date</span>
<span class="t" style="top:175.64px;font-size:6.7px;color:#1a1a1a;font-weight:700;left:421.00px;transform-origin:0 50%;transform:scaleX(0.9574);-webkit-text-stroke:0.22px currentColor;">Nombre Jours Ouvrables</span>
<span class="t" style="top:185.61px;font-size:6.7px;color:#1a1a1a;left:269.20px;transform-origin:0 50%;transform:scaleX(1.0225);-webkit-text-stroke:0.22px currentColor;">Vendredi</span>
<span class="t" style="top:185.61px;font-size:6.7px;color:#1a1a1a;right:382.00px;transform-origin:100% 50%;transform:scaleX(0.9833);-webkit-text-stroke:0.22px currentColor;">1 avril 2022</span>
<span class="t" style="top:195.59px;font-size:6.7px;color:#1a1a1a;left:269.20px;transform-origin:0 50%;transform:scaleX(0.9873);-webkit-text-stroke:0.22px currentColor;">Samedi</span>
<span class="t" style="top:195.59px;font-size:6.7px;color:#1a1a1a;right:382.00px;transform-origin:100% 50%;transform:scaleX(0.9833);-webkit-text-stroke:0.22px currentColor;">2 avril 2022</span>
<span class="t" style="top:205.56px;font-size:6.7px;color:#1a1a1a;left:269.20px;transform-origin:0 50%;transform:scaleX(0.9831);-webkit-text-stroke:0.22px currentColor;">Dimanche</span>
<span class="t" style="top:205.56px;font-size:6.7px;color:#1a1a1a;right:382.00px;transform-origin:100% 50%;transform:scaleX(0.9833);-webkit-text-stroke:0.22px currentColor;">3 avril 2022</span>
<span class="t" style="top:215.54px;font-size:6.7px;color:#1a1a1a;left:269.20px;transform-origin:0 50%;transform:scaleX(1.0015);-webkit-text-stroke:0.22px currentColor;">Lundi</span>
<span class="t" style="top:215.54px;font-size:6.7px;color:#1a1a1a;right:382.00px;transform-origin:100% 50%;transform:scaleX(0.9833);-webkit-text-stroke:0.22px currentColor;">4 avril 2022</span>
<span class="t" style="top:225.51px;font-size:6.7px;color:#1a1a1a;left:269.20px;transform-origin:0 50%;transform:scaleX(1.0517);-webkit-text-stroke:0.22px currentColor;">Mardi</span>
<span class="t" style="top:225.51px;font-size:6.7px;color:#1a1a1a;right:382.00px;transform-origin:100% 50%;transform:scaleX(0.9833);-webkit-text-stroke:0.22px currentColor;">5 avril 2022</span>
<span class="t" style="top:235.49px;font-size:6.7px;color:#1a1a1a;left:269.20px;transform-origin:0 50%;transform:scaleX(1.0763);-webkit-text-stroke:0.22px currentColor;">Mercredi</span>
<span class="t" style="top:235.49px;font-size:6.7px;color:#1a1a1a;right:382.00px;transform-origin:100% 50%;transform:scaleX(0.9833);-webkit-text-stroke:0.22px currentColor;">6 avril 2022</span>
<span class="t" style="top:245.46px;font-size:6.7px;color:#1a1a1a;left:269.20px;transform-origin:0 50%;transform:scaleX(0.9750);-webkit-text-stroke:0.22px currentColor;">Jeudi</span>
<span class="t" style="top:245.46px;font-size:6.7px;color:#1a1a1a;right:382.00px;transform-origin:100% 50%;transform:scaleX(0.9833);-webkit-text-stroke:0.22px currentColor;">7 avril 2022</span>
<span class="t" style="top:255.44px;font-size:6.7px;color:#1a1a1a;left:269.20px;transform-origin:0 50%;transform:scaleX(1.0225);-webkit-text-stroke:0.22px currentColor;">Vendredi</span>
<span class="t" style="top:255.44px;font-size:6.7px;color:#1a1a1a;right:382.00px;transform-origin:100% 50%;transform:scaleX(0.9833);-webkit-text-stroke:0.22px currentColor;">8 avril 2022</span>
<span class="t" style="top:265.41px;font-size:6.7px;color:#1a1a1a;left:269.20px;transform-origin:0 50%;transform:scaleX(0.9873);-webkit-text-stroke:0.22px currentColor;">Samedi</span>
<span class="t" style="top:265.41px;font-size:6.7px;color:#1a1a1a;right:382.00px;transform-origin:100% 50%;transform:scaleX(0.9833);-webkit-text-stroke:0.22px currentColor;">9 avril 2022</span>
<span class="t" style="top:275.39px;font-size:6.7px;color:#1a1a1a;left:269.20px;transform-origin:0 50%;transform:scaleX(0.9831);-webkit-text-stroke:0.22px currentColor;">Dimanche</span>
<span class="t" style="top:275.39px;font-size:6.7px;color:#1a1a1a;right:382.00px;transform-origin:100% 50%;transform:scaleX(0.9818);-webkit-text-stroke:0.22px currentColor;">10 avril 2022</span>
<span class="t" style="top:285.36px;font-size:6.7px;color:#1a1a1a;left:269.20px;transform-origin:0 50%;transform:scaleX(1.0015);-webkit-text-stroke:0.22px currentColor;">Lundi</span>
<span class="t" style="top:285.36px;font-size:6.7px;color:#1a1a1a;right:382.00px;transform-origin:100% 50%;transform:scaleX(0.9948);-webkit-text-stroke:0.22px currentColor;">11 avril 2022</span>
<span class="t" style="top:295.34px;font-size:6.7px;color:#1a1a1a;left:269.20px;transform-origin:0 50%;transform:scaleX(1.0517);-webkit-text-stroke:0.22px currentColor;">Mardi</span>
<span class="t" style="top:295.34px;font-size:6.7px;color:#1a1a1a;right:382.00px;transform-origin:100% 50%;transform:scaleX(0.9818);-webkit-text-stroke:0.22px currentColor;">12 avril 2022</span>
<span class="t" style="top:305.31px;font-size:6.7px;color:#1a1a1a;left:269.20px;transform-origin:0 50%;transform:scaleX(1.0763);-webkit-text-stroke:0.22px currentColor;">Mercredi</span>
<span class="t" style="top:305.31px;font-size:6.7px;color:#1a1a1a;right:382.00px;transform-origin:100% 50%;transform:scaleX(0.9818);-webkit-text-stroke:0.22px currentColor;">13 avril 2022</span>
<span class="t" style="top:315.29px;font-size:6.7px;color:#1a1a1a;left:269.20px;transform-origin:0 50%;transform:scaleX(0.9750);-webkit-text-stroke:0.22px currentColor;">Jeudi</span>
<span class="t" style="top:315.29px;font-size:6.7px;color:#1a1a1a;right:382.00px;transform-origin:100% 50%;transform:scaleX(0.9818);-webkit-text-stroke:0.22px currentColor;">14 avril 2022</span>
<span class="t" style="top:325.26px;font-size:6.7px;color:#1a1a1a;left:269.20px;transform-origin:0 50%;transform:scaleX(1.0225);-webkit-text-stroke:0.22px currentColor;">Vendredi</span>
<span class="t" style="top:325.26px;font-size:6.7px;color:#1a1a1a;right:382.00px;transform-origin:100% 50%;transform:scaleX(0.9818);-webkit-text-stroke:0.22px currentColor;">15 avril 2022</span>
<span class="t" style="top:335.24px;font-size:6.7px;color:#1a1a1a;left:269.20px;transform-origin:0 50%;transform:scaleX(0.9873);-webkit-text-stroke:0.22px currentColor;">Samedi</span>
<span class="t" style="top:335.24px;font-size:6.7px;color:#1a1a1a;right:382.00px;transform-origin:100% 50%;transform:scaleX(0.9818);-webkit-text-stroke:0.22px currentColor;">16 avril 2022</span>
<span class="t" style="top:345.21px;font-size:6.7px;color:#1a1a1a;left:269.20px;transform-origin:0 50%;transform:scaleX(0.9831);-webkit-text-stroke:0.22px currentColor;">Dimanche</span>
<span class="t" style="top:345.21px;font-size:6.7px;color:#1a1a1a;right:382.00px;transform-origin:100% 50%;transform:scaleX(0.9818);-webkit-text-stroke:0.22px currentColor;">17 avril 2022</span>
<span class="t" style="top:355.19px;font-size:6.7px;color:#1a1a1a;left:269.20px;transform-origin:0 50%;transform:scaleX(1.0015);-webkit-text-stroke:0.22px currentColor;">Lundi</span>
<span class="t" style="top:355.19px;font-size:6.7px;color:#1a1a1a;right:382.00px;transform-origin:100% 50%;transform:scaleX(0.9818);-webkit-text-stroke:0.22px currentColor;">18 avril 2022</span>
<span class="t" style="top:365.16px;font-size:6.7px;color:#1a1a1a;left:269.20px;transform-origin:0 50%;transform:scaleX(1.0517);-webkit-text-stroke:0.22px currentColor;">Mardi</span>
<span class="t" style="top:365.16px;font-size:6.7px;color:#1a1a1a;right:382.00px;transform-origin:100% 50%;transform:scaleX(0.9818);-webkit-text-stroke:0.22px currentColor;">19 avril 2022</span>
<span class="t" style="top:375.14px;font-size:6.7px;color:#1a1a1a;left:269.20px;transform-origin:0 50%;transform:scaleX(1.0763);-webkit-text-stroke:0.22px currentColor;">Mercredi</span>
<span class="t" style="top:375.14px;font-size:6.7px;color:#1a1a1a;right:382.00px;transform-origin:100% 50%;transform:scaleX(0.9818);-webkit-text-stroke:0.22px currentColor;">20 avril 2022</span>
<span class="t" style="top:385.11px;font-size:6.7px;color:#1a1a1a;left:269.20px;transform-origin:0 50%;transform:scaleX(0.9750);-webkit-text-stroke:0.22px currentColor;">Jeudi</span>
<span class="t" style="top:385.11px;font-size:6.7px;color:#1a1a1a;right:382.00px;transform-origin:100% 50%;transform:scaleX(0.9818);-webkit-text-stroke:0.22px currentColor;">21 avril 2022</span>
<span class="t" style="top:395.09px;font-size:6.7px;color:#1a1a1a;left:269.20px;transform-origin:0 50%;transform:scaleX(1.0225);-webkit-text-stroke:0.22px currentColor;">Vendredi</span>
<span class="t" style="top:395.09px;font-size:6.7px;color:#1a1a1a;right:382.00px;transform-origin:100% 50%;transform:scaleX(0.9818);-webkit-text-stroke:0.22px currentColor;">22 avril 2022</span>
<svg class="r" style="left:0;top:0" width="800" height="432" viewBox="0 0 800 432"><rect x="267.20" y="175.45" width="251.80" height="0.80" fill="#7d7d7d"/><rect x="267.20" y="185.42" width="251.80" height="0.80" fill="#7d7d7d"/><rect x="267.20" y="195.40" width="251.80" height="0.80" fill="#7d7d7d"/><rect x="267.20" y="205.38" width="152.20" height="0.80" fill="#7d7d7d"/><rect x="267.20" y="215.35" width="152.20" height="0.80" fill="#7d7d7d"/><rect x="267.20" y="225.33" width="152.20" height="0.80" fill="#7d7d7d"/><rect x="267.20" y="235.30" width="152.20" height="0.80" fill="#7d7d7d"/><rect x="267.20" y="245.28" width="152.20" height="0.80" fill="#7d7d7d"/><rect x="267.20" y="255.25" width="152.20" height="0.80" fill="#7d7d7d"/><rect x="267.20" y="265.23" width="152.20" height="0.80" fill="#7d7d7d"/><rect x="267.20" y="275.20" width="152.20" height="0.80" fill="#7d7d7d"/><rect x="267.20" y="285.18" width="152.20" height="0.80" fill="#7d7d7d"/><rect x="267.20" y="295.15" width="152.20" height="0.80" fill="#7d7d7d"/><rect x="267.20" y="305.12" width="152.20" height="0.80" fill="#7d7d7d"/><rect x="267.20" y="315.10" width="152.20" height="0.80" fill="#7d7d7d"/><rect x="267.20" y="325.08" width="152.20" height="0.80" fill="#7d7d7d"/><rect x="267.20" y="335.05" width="152.20" height="0.80" fill="#7d7d7d"/><rect x="267.20" y="345.03" width="152.20" height="0.80" fill="#7d7d7d"/><rect x="267.20" y="355.00" width="152.20" height="0.80" fill="#7d7d7d"/><rect x="267.20" y="364.98" width="152.20" height="0.80" fill="#7d7d7d"/><rect x="267.20" y="374.95" width="152.20" height="0.80" fill="#7d7d7d"/><rect x="267.20" y="384.93" width="152.20" height="0.80" fill="#7d7d7d"/><rect x="267.20" y="394.90" width="152.20" height="0.80" fill="#7d7d7d"/><rect x="267.20" y="404.88" width="152.20" height="0.80" fill="#7d7d7d"/><rect x="267.20" y="175.85" width="0.80" height="227.15" fill="#7d7d7d"/><rect x="309.60" y="175.85" width="0.80" height="227.15" fill="#7d7d7d"/><rect x="418.60" y="175.85" width="0.80" height="227.15" fill="#7d7d7d"/><rect x="518.20" y="175.85" width="0.80" height="19.95" fill="#7d7d7d"/><rect x="152.40" y="402.50" width="471.70" height="13.30" fill="#e6e6e6"/><rect x="152.40" y="402.20" width="471.70" height="0.60" fill="#c9c9c9"/></svg>
<svg class="r" style="left:162.60px;top:405.60px" width="4" height="5" viewBox="0 0 4 5"><path d="M2.8 0.8L1.2 2.5L2.8 4.2" fill="none" stroke="#bdbdbd" stroke-width="0.7"/></svg>
<svg class="r" style="left:173.80px;top:405.60px" width="4" height="5" viewBox="0 0 4 5"><path d="M1.2 0.8L2.8 2.5L1.2 4.2" fill="none" stroke="#bdbdbd" stroke-width="0.7"/></svg>
<svg class="r" style="left:0;top:0" width="800" height="432" viewBox="0 0 800 432"><rect x="194.00" y="403.70" width="0.80" height="7.90" fill="#b4b4b4"/><rect x="221.60" y="403.70" width="0.80" height="7.90" fill="#b4b4b4"/><rect x="269.00" y="403.70" width="0.80" height="7.90" fill="#b4b4b4"/><rect x="294.20" y="403.70" width="0.80" height="7.90" fill="#b4b4b4"/><rect x="317.60" y="403.70" width="0.80" height="7.90" fill="#b4b4b4"/><rect x="362.60" y="403.70" width="0.80" height="7.90" fill="#b4b4b4"/><rect x="403.60" y="403.70" width="0.80" height="7.90" fill="#b4b4b4"/><rect x="455.60" y="403.70" width="0.80" height="7.90" fill="#b4b4b4"/><rect x="518.60" y="403.70" width="0.80" height="7.90" fill="#b4b4b4"/></svg>
<span class="t" style="top:401.30px;font-size:6.6px;color:#5a5a5a;left:200.40px;transform-origin:0 50%;transform:scaleX(1.0235);-webkit-text-stroke:0.22px currentColor;">Filtre</span>
<span class="t" style="top:401.30px;font-size:6.6px;color:#5a5a5a;left:227.40px;transform-origin:0 50%;transform:scaleX(1.0592);-webkit-text-stroke:0.22px currentColor;">Regrouper</span>
<span class="t" style="top:401.30px;font-size:6.6px;color:#5a5a5a;left:274.50px;transform-origin:0 50%;transform:scaleX(0.9862);-webkit-text-stroke:0.22px currentColor;">MFC</span>
<span class="t" style="top:401.30px;font-size:6.6px;color:#5a5a5a;left:299.00px;transform-origin:0 50%;transform:scaleX(0.9585);-webkit-text-stroke:0.22px currentColor;">TCD</span>
<span class="t" style="top:401.30px;font-size:6.6px;color:#5a5a5a;left:324.00px;transform-origin:0 50%;transform:scaleX(1.0715);-webkit-text-stroke:0.22px currentColor;">Graphique</span>
<span class="t" style="top:401.30px;font-size:6.6px;color:#5a5a5a;left:368.00px;transform-origin:0 50%;transform:scaleX(1.0632);-webkit-text-stroke:0.22px currentColor;">Fonctions</span>
<span class="t" style="top:401.30px;font-size:6.6px;color:#5a5a5a;left:409.50px;transform-origin:0 50%;transform:scaleX(0.9954);-webkit-text-stroke:0.22px currentColor;">CSV en Excel</span>
<span class="t" style="top:401.30px;font-size:6.6px;color:#5a5a5a;left:462.00px;transform-origin:0 50%;transform:scaleX(1.0738);-webkit-text-stroke:0.22px currentColor;">Liste déroulante</span>
<span class="t" style="top:401.30px;font-size:6.6px;color:#5a5a5a;left:525.00px;transform-origin:0 50%;transform:scaleX(1.0160);-webkit-text-stroke:0.22px currentColor;">Remplacer</span>
<svg class="r" style="left:0;top:0" width="800" height="432" viewBox="0 0 800 432"><rect x="564.00" y="402.50" width="51.00" height="10.10" fill="#fbfbfb"/><rect x="564.00" y="411.50" width="51.00" height="1.10" fill="#217346"/></svg>
<span class="t" style="top:401.30px;font-size:6.6px;color:#1e6b41;font-weight:700;left:569.40px;transform-origin:0 50%;transform:scaleX(0.9922);-webkit-text-stroke:0.22px currentColor;">Jours ouvres</span>
</div>
</body>
</html>
